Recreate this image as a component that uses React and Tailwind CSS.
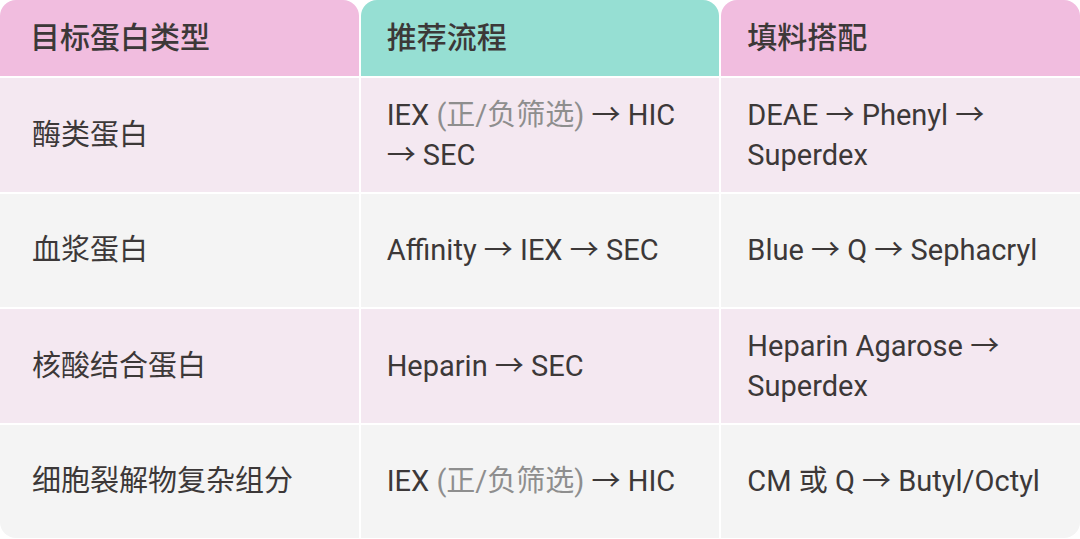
import React from 'react';

const rows = [
  {
    type: '酶类蛋白',
    flow: (
      <>
        IEX <span className="text-[#8e8e8e]">(正/负筛选)</span> → HIC → SEC
      </>
    ),
    media: 'DEAE → Phenyl → Superdex',
    bg: 'bg-[#f4e8f1]',
  },
  { type: '血浆蛋白', flow: 'Affinity → IEX → SEC', media: 'Blue → Q → Sephacryl', bg: 'bg-[#f4f4f4]' },
  { type: '核酸结合蛋白', flow: 'Heparin → SEC', media: 'Heparin Agarose → Superdex', bg: 'bg-[#f4e8f1]' },
  {
    type: '细胞裂解物复杂组分',
    flow: (
      <>
        IEX <span className="text-[#8e8e8e]">(正/负筛选)</span> → HIC
      </>
    ),
    media: 'CM 或 Q → Butyl/Octyl',
    bg: 'bg-[#f4f4f4]',
  },
];

export default function App() {
  return (
    <div
      className="w-[1080px] h-[539px] bg-white text-[#3c3838] text-[29px] leading-[40px]"
      style={{ fontFamily: 'Roboto, "Noto Sans CJK SC", sans-serif' }}
    >
      <div className="grid grid-cols-3 grid-rows-[76px_repeat(4,minmax(0,1fr))] gap-[2px] h-[538px]">
        {/* Header */}
        <div className="flex items-center pl-[30px] bg-[#f1bddf] rounded-t-2xl text-[30px] font-medium">目标蛋白类型</div>
        <div className="flex items-center pl-[26px] bg-[#96dfd3] rounded-t-2xl text-[30px] font-medium">推荐流程</div>
        <div className="flex items-center pl-[26px] bg-[#f1bddf] rounded-t-2xl text-[30px] font-medium">填料搭配</div>

        {rows.map((r, i) => {
          const last = i === rows.length - 1;
          return (
            <React.Fragment key={r.type}>
              <div className={`flex items-center pl-[32px] pr-6 ${r.bg} ${last ? 'rounded-bl-2xl' : ''}`}>{r.type}</div>
              <div className={`flex items-center pl-[26px] pr-6 ${r.bg}`}>
                <div>{r.flow}</div>
              </div>
              <div className={`flex items-center pl-[26px] pr-6 ${r.bg} ${last ? 'rounded-br-2xl' : ''}`}>
                <div>{r.media}</div>
              </div>
            </React.Fragment>
          );
        })}
      </div>
    </div>
  );
}
